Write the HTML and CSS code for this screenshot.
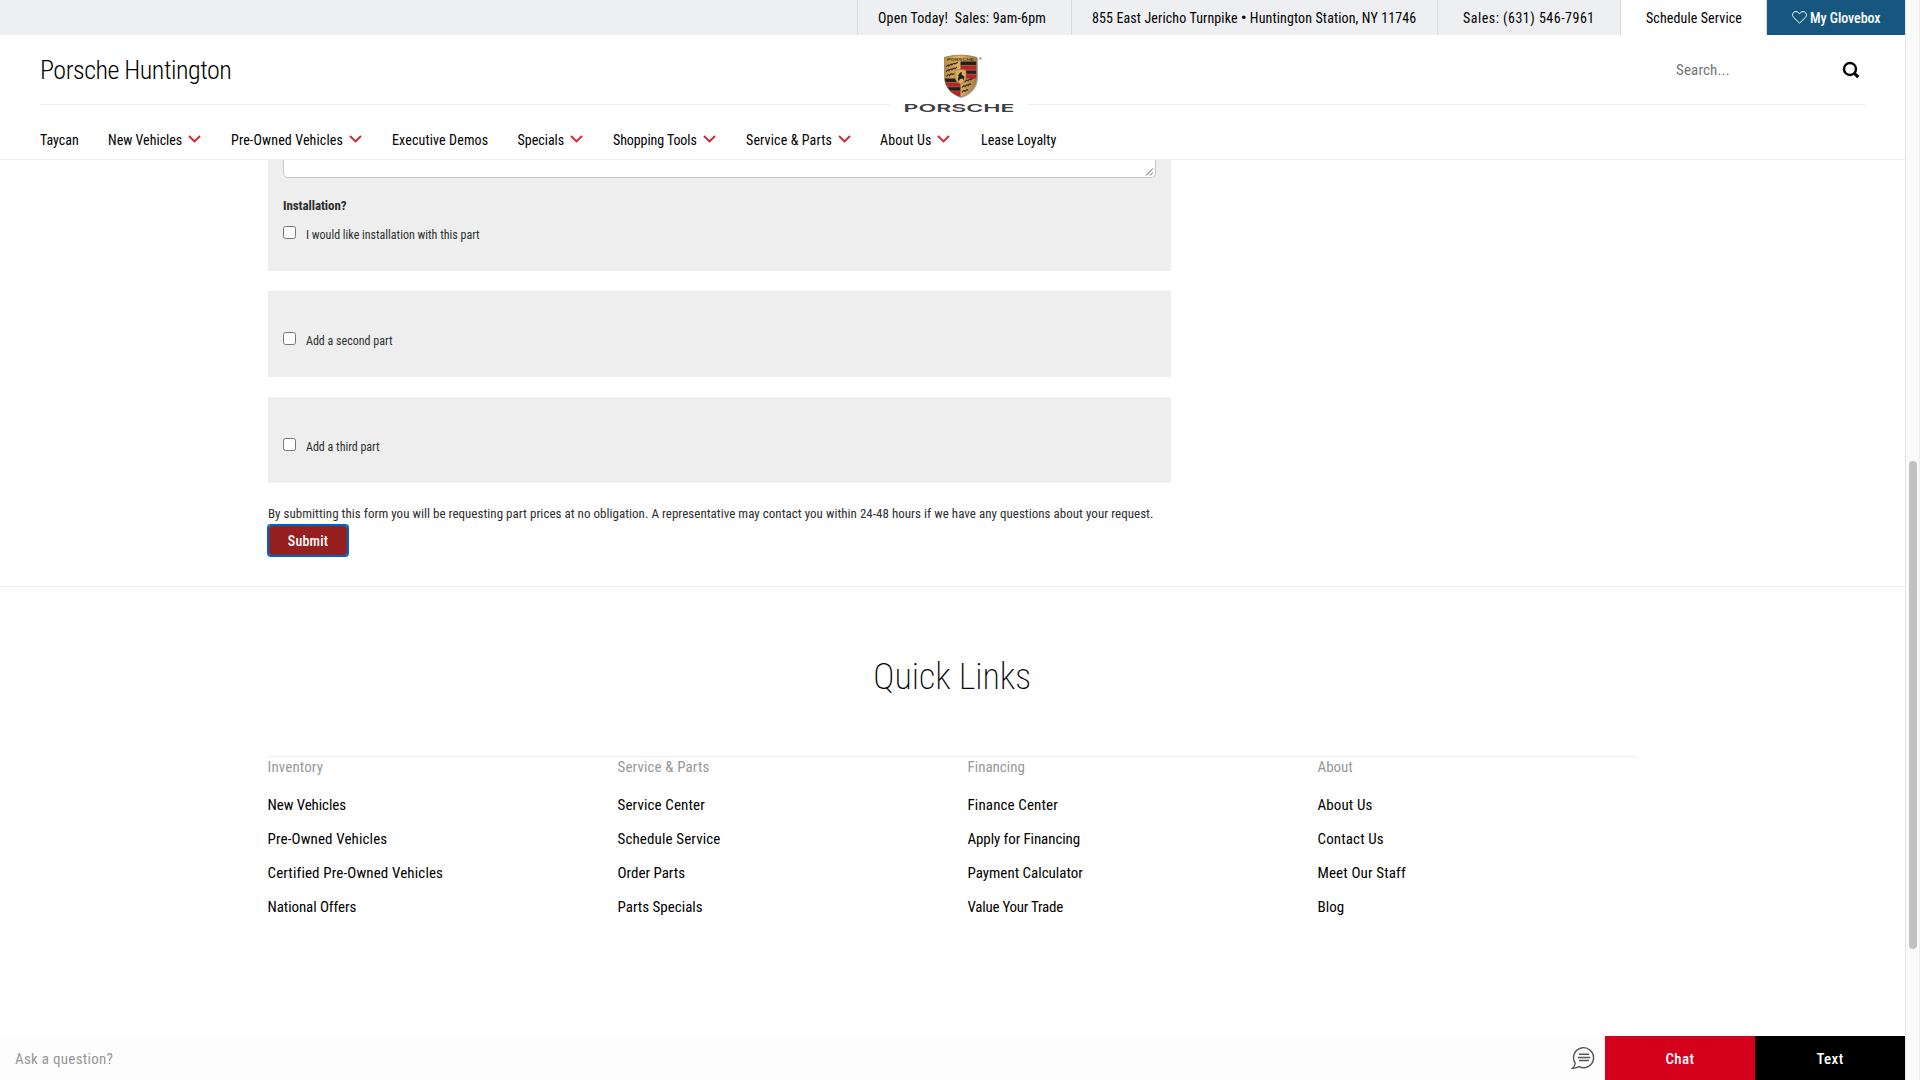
FILE: index.html
```html
<!DOCTYPE html>
<html lang="en">
<head>
<meta charset="utf-8">
<title>Porsche Huntington</title>
<link rel="stylesheet" href="styles.css">
</head>
<body>
<svg class="defs" width="0" height="0">
  <symbol id="chevron" viewBox="0 0 13 8"><path d="M1 1l5.500 5.400L12 1" fill="none" stroke="#d5282e" stroke-width="1.9"/></symbol>
</svg>
<div class="page">
  <div class="topbar">
    <div class="top-item hours">Open Today!&nbsp; Sales: 9am-6pm</div>
    <div class="top-item address">855 East Jericho Turnpike <b>•</b> Huntington Station, NY 11746</div>
    <div class="top-item phone">Sales: (631) 546-7961</div>
    <div class="top-item schedule">Schedule Service</div>
    <div class="top-item glovebox">
      <svg width="15" height="13" viewBox="0 0 15 13"><path d="M7.500 12.200L1.600 6.400C-.6 3.900 1 .6 3.900.6c1.700 0 2.800 1 3.600 2.200C8.300 1.600 9.400.6 11.100.6c2.900 0 4.500 3.300 2.300 5.800z" fill="none" stroke="#fff" stroke-width="1"/></svg>
      <span>My Glovebox</span>
    </div>
  </div>

  <header class="header">
    <div class="brand-row">
      <div class="dealer">Porsche Huntington</div>
      <svg class="logo" width="138" height="64" viewBox="0 0 138 64">
        <defs>
          <linearGradient id="gold" x1="0" x2="1"><stop offset="0" stop-color="#b98b42"/><stop offset=".45" stop-color="#dcb569"/><stop offset="1" stop-color="#a97c38"/></linearGradient>
          <clipPath id="shield"><path d="M54.500 8Q70.500 3.500 86.500 8V28C86.500 40 79 46.500 70.500 49.500C62 46.500 54.500 40 54.500 28Z"/></clipPath>
        </defs>
        <g transform="translate(0 .6) scale(1 .96)">
          <path d="M55.500 9Q71 4.500 88 9V29C88 41 80 47.500 71.500 50.200C64 47.500 56 41 56 28Z" fill="#a9a9ae"/>
          <g clip-path="url(#shield)">
            <rect x="54" y="5" width="33" height="46" fill="url(#gold)"/>
            <path d="M70.500 12.500h16v4h-16zM70.500 21.500h16v4h-16zM54.500 30h16v4h-16zM54.500 39h16v4h-16z" fill="#211e20"/>
            <path d="M70.500 16.500h16v5h-16zM70.500 25.500h16v4.500h-16zM54.500 34h16v5h-16zM54.500 43h16v7h-16z" fill="#b9232a"/>
            <path d="M54.500 34.200h16M54.500 38.800h16M54.500 43h16M70.500 16.500h16M70.500 21.300h16M70.500 25.500h16" stroke="#a87a43" stroke-width=".6"/>
            <path d="M56 18q2-3 3-1q2-3 3-1q2-3 3-1l3-2M56 23q2-3 3-1q2-3 3-1q2-3 3-1l2-2M56.500 28q2-3 3-1q2-3 3-1l2-1M72 34.500q2-3 3-1q2-3 3-1q2-3 3-1l2-2M72 39.500q2-3 3-1q2-3 3-1q2-3 3-1M72 44.500q2-3 3-1q2-3 3-1" fill="none" stroke="#33291d" stroke-width="1.200"/>
            <path d="M65 21.500q5.500-2 11 0v7q0 5-5.500 7.500q-5.500-2.500-5.500-7.500z" fill="#d8b061" stroke="#8c6631" stroke-width=".6"/>
            <path d="M68 27l2.500-3.500l1.500.2l-.5 2.300l3 2.300l-1 4l-1-2.300l-2.700.5l-1 3l-1-3.500l1-2z" fill="#211e20"/>
            <text x="70.500" y="12" text-anchor="middle" class="crest-text" textLength="27" lengthAdjust="spacingAndGlyphs">PORSCHE</text>
          </g>
          <path d="M54.500 8Q70.500 3.500 86.500 8V28C86.500 40 79 46.500 70.500 49.500C62 46.500 54.500 40 54.500 28Z" fill="none" stroke="#94703a" stroke-width=".7"/>
        </g>
        <circle cx="90.300" cy="9.500" r="1.200" fill="#999"/>
        <text x="13.500" y="63" class="wordmark" textLength="111" lengthAdjust="spacingAndGlyphs">PORSCHE</text>
      </svg>
      <div class="search">
        <span>Search...</span>
        <svg width="18" height="18" viewBox="0 0 18 18"><circle cx="8" cy="8" r="6" fill="none" stroke="#000" stroke-width="2.400"/><path d="M11.800 11.800l4.500 4.300" stroke="#000" stroke-width="3"/></svg>
      </div>
    </div>
    <nav class="nav">
      <a>Taycan</a>
      <a>New Vehicles<svg><use href="#chevron"/></svg></a>
      <a class="loose">Pre-Owned Vehicles<svg><use href="#chevron"/></svg></a>
      <a class="loose">Executive Demos</a>
      <a>Specials<svg><use href="#chevron"/></svg></a>
      <a class="snug">Shopping Tools<svg><use href="#chevron"/></svg></a>
      <a class="loose">Service &amp; Parts<svg><use href="#chevron"/></svg></a>
      <a class="loose">About Us<svg><use href="#chevron"/></svg></a>
      <a>Lease Loyalty</a>
    </nav>
  </header>

  <main class="form">
    <section class="panel first">
      <div class="textarea"><svg width="9" height="9" viewBox="0 0 9 9"><path d="M1 8.500L8 1.500M5 8.500L8 5.500" stroke="#555" stroke-width="1"/></svg></div>
      <div class="legend">Installation?</div>
      <div class="check"><i></i><span>I would like installation with this part</span></div>
    </section>
    <section class="panel"><div class="check"><i></i><span>Add a second part</span></div></section>
    <section class="panel"><div class="check"><i></i><span>Add a third part</span></div></section>
    <p class="note">By submitting this form you will be requesting part prices at no obligation. A representative may contact you within 24-48 hours if we have any questions about your request.</p>
    <button class="submit">Submit</button>
  </main>

  <footer class="footer">
    <h2>Quick Links</h2>
    <div class="columns">
      <div><h3 class="loose">Inventory</h3><a class="snug">New Vehicles</a><a class="loose">Pre-Owned Vehicles</a><a class="loose">Certified Pre-Owned Vehicles</a><a class="snug">National Offers</a></div>
      <div><h3 class="loose">Service &amp; Parts</h3><a class="loose">Service Center</a><a class="loose">Schedule Service</a><a>Order Parts</a><a>Parts Specials</a></div>
      <div><h3>Financing</h3><a class="loose">Finance Center</a><a class="snug">Apply for Financing</a><a>Payment Calculator</a><a class="tight">Value Your Trade</a></div>
      <div><h3>About</h3><a class="loose">About Us</a><a class="loose">Contact Us</a><a class="loose">Meet Our Staff</a><a>Blog</a></div>
    </div>
  </footer>

  <div class="chatbar">
    <span class="ask">Ask a question?</span>
    <svg width="24" height="24" viewBox="0 0 24 24" fill="none" stroke="#555"><path d="M4.200 17.200A10 10 0 1 1 8 20.600Q5 22.200 1.500 22.300Q4 20 4.200 17.200z" stroke-width="1.400"/><path d="M8 8.300h10M6.800 11.500h12.400M8 14.500h10" stroke-width="1.500"/></svg>
    <div class="chat">Chat</div>
    <div class="text">Text</div>
  </div>
</div>
<div class="scrollbar"><div class="thumb"></div></div>
</body>
</html>
```
FILE: styles.css
```css
* { box-sizing: border-box; }
body {
  margin: 0;
  height: 1080px;
  overflow: hidden;
  display: flex;
  font-family: "Roboto Condensed", Roboto, sans-serif;
  font-stretch: 75%;
  font-size: 14px;
  color: #000;
  background: #fff;
}
svg { flex: none; }
.defs { position: absolute; }
.page { width: 1905px; height: 1080px; display: flex; flex-direction: column; }
.tight { letter-spacing: -.25px; }
.snug { letter-spacing: -.09px; }
.loose { letter-spacing: .13px; }

.topbar { height: 35px; display: flex; justify-content: flex-end; background: #eeeff1; line-height: 36px; }
.top-item { border-left: 1px solid #d8d9db; white-space: nowrap; }
.hours { width: 214px; padding-left: 20px; letter-spacing: .18px; }
.address { width: 366px; padding-left: 20px; letter-spacing: .12px; }
.address b { font-size: 15px; line-height: 1; }
.phone { width: 183px; padding-left: 25px; letter-spacing: .5px; }
.schedule { width: 146px; padding-left: 25px; letter-spacing: .11px; background: #fff; }
.glovebox { width: 139px; height: 35px; padding-left: 25px; display: flex; align-items: center; gap: 3px; background: #17577f; color: #fff; font-weight: 500; letter-spacing: -.05px; }

.header { height: 125px; border-bottom: 1px solid #ededed; }
.brand-row {
  height: 70px;
  margin: 0 40px;
  display: grid;
  grid-template-columns: 850px 138px 648px 1fr;
  background: linear-gradient(#ededed, #ededed) 0 100% / 850px 1px no-repeat, linear-gradient(#ededed, #ededed) 988px 100% / 837px 1px no-repeat;
}
.dealer { font-size: 26px; font-weight: 300; line-height: 71px; letter-spacing: -.48px; }
.logo { margin-top: 14px; overflow: visible; }
.wordmark { font: 600 11px Inter, sans-serif; fill: #3f3e42; }
.crest-text { font: 700 4px Inter, sans-serif; fill: #5a4322; }
.search { grid-column: 4; display: flex; align-items: center; justify-content: space-between; height: 70px; padding-right: 5px; font-size: 15px; letter-spacing: .15px; color: #737373; }
.nav { display: grid; grid-template-columns: 68px 123px 161px 125.5px 95.5px 133px 134px 101px auto; padding: 20px 40px 0; line-height: 30px; }
.nav a { display: flex; align-items: center; gap: 6px; white-space: nowrap; }
.nav svg { width: 13px; height: 8px; margin-top: -2px; }

.form { height: 427px; padding-left: 268px; border-bottom: 1px solid #ededed; color: #2d2e2f; }
.panel { width: 903px; height: 86px; margin-bottom: 20px; padding: 41px 15px 0; background: #eee; }
.panel.first { height: 111px; padding-top: 0; }
.textarea { height: 18px; display: flex; justify-content: flex-end; align-items: flex-end; padding: 0 1px 1px; background: #fff; border: 1px solid #c6c6c6; border-top: 0; border-radius: 0 0 5px 5px; }
.legend { margin-top: 18px; height: 30px; line-height: 20px; font-size: 13px; font-weight: 700; letter-spacing: -.08px; }
.check { display: flex; gap: 10px; font-size: 12px; line-height: 19px; }
.check i { width: 13px; height: 13px; background: #fff; border: 1px solid #767676; border-radius: 2.5px; }
.note { margin: 0; height: 23px; line-height: 21px; font-size: 13px; letter-spacing: .025px; white-space: nowrap; }
.submit { display: block; width: 78px; height: 29px; margin-left: 1px; padding: 0; border: 0; border-radius: 2px; outline: 2px solid #0062d1; background: #961f1f; color: #fff; font: 500 14px "Roboto Condensed", Roboto, sans-serif; letter-spacing: .21px; }

.footer { height: 449px; padding: 67px 268px 0 267.500px; }
.footer h2 { margin: 0; height: 102px; line-height: 47px; text-align: center; font-size: 36px; font-weight: 200; }
.columns { border-top: 1px solid #ededed; display: grid; grid-template-columns: repeat(4, 350px); font-size: 15px; }
.columns h3 { margin: 0; height: 31px; line-height: 20px; font-size: 15px; font-weight: 400; color: #969999; }
.columns a { display: block; line-height: 34px; }

.chatbar { height: 44px; display: flex; align-items: center; background: #fdfdfd; font-size: 15px; line-height: 46px; }
.ask { flex: 1; padding-left: 15px; padding-top: 1px; letter-spacing: .28px; color: #969696; }
.chat, .text { width: 150px; height: 44px; text-align: center; color: #fff; font-weight: 500; letter-spacing: .4px; }
.chat { margin-left: 10px; background: #d5001c; }
.text { background: #000; }

.scrollbar { width: 15px; padding: 461px 2px 0 3px; background: #fafafa; border-left: 1px solid #e7e7e7; border-right: 1px solid #ededed; }
.thumb { width: 8px; height: 488px; border-radius: 4px; background: #c1c1c1; }
```
